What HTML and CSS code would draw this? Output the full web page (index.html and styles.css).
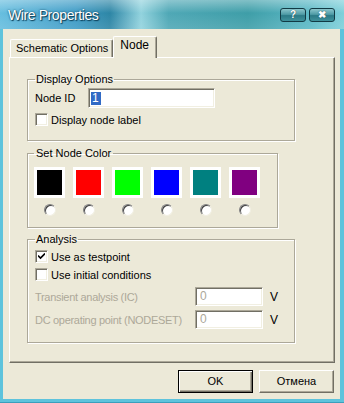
FILE: index.html
```html
<!DOCTYPE html>
<html lang="ru">
<head>
    <meta charset="UTF-8">
    <title>Wire Properties</title>
    <link rel="stylesheet" href="styles.css">
</head>
<body>
<div class="window">
    <div class="titlebar">
        <span class="title">Wire Properties</span>
        <div class="caption-buttons">
            <span class="cap-btn">?</span>
            <span class="cap-btn">&#x2716;</span>
        </div>
    </div>
    <div class="client">
        <div class="tabs">
            <div class="tab">Schematic Options</div>
            <div class="tab active">Node</div>
        </div>
        <div class="panel">
            <fieldset class="group group-display">
                <legend>Display Options</legend>
                <div class="row">
                    <span class="label label-id">Node ID</span>
                    <div class="field field-id"><span class="sel">1</span></div>
                </div>
                <div class="check"><span class="box"></span>Display node label</div>
            </fieldset>

            <fieldset class="group group-colors">
                <legend>Set Node Color</legend>
                <div class="swatches">
                    <div class="swatch"><span class="chip c-black"></span><span class="radio"></span></div>
                    <div class="swatch"><span class="chip c-red"></span><span class="radio"></span></div>
                    <div class="swatch"><span class="chip c-lime"></span><span class="radio"></span></div>
                    <div class="swatch"><span class="chip c-blue"></span><span class="radio"></span></div>
                    <div class="swatch"><span class="chip c-teal"></span><span class="radio"></span></div>
                    <div class="swatch"><span class="chip c-purple"></span><span class="radio"></span></div>
                </div>
            </fieldset>

            <fieldset class="group group-analysis">
                <legend>Analysis</legend>
                <div class="check">
                    <span class="box"><svg width="7" height="7" viewBox="0 0 7 7"><path d="M0 2.5 L2.5 5 L7 0.5" fill="none" stroke="#000" stroke-width="1.6"/></svg></span>Use as testpoint
                </div>
                <div class="check check-second"><span class="box"></span>Use initial conditions</div>
                <div class="row row-value row-first">
                    <span class="label label-value disabled">Transient analysis (IC)</span>
                    <div class="field field-value">0</div>
                    <span class="unit">V</span>
                </div>
                <div class="row row-value">
                    <span class="label label-value disabled">DC operating point (NODESET)</span>
                    <div class="field field-value">0</div>
                    <span class="unit">V</span>
                </div>
            </fieldset>
        </div>
        <div class="buttons">
            <div class="button default">OK</div>
            <div class="button">Отмена</div>
        </div>
    </div>
</div>
</body>
</html>
```

FILE: styles.css
```css
body {
    margin: 0;
    font-family: "Liberation Sans", Arial, sans-serif;
    font-size: 11px;
    color: #000;
}
.window {
    width: 344px;
    height: 403px;
    box-sizing: border-box;
    display: flex;
    flex-direction: column;
    padding: 0 4px 3px 3px;
    background: #5ec3dc;
    border-bottom: 1px solid #3a9fbc;
}
.titlebar {
    height: 29px;
    margin: 0 -4px 0 -3px;
    padding: 0 9px 0 8px;
    display: flex;
    align-items: center;
    justify-content: space-between;
    background:
        linear-gradient(to bottom, rgba(255, 255, 255, 0.35), rgba(255, 255, 255, 0) 45%, rgba(255, 255, 255, 0.1)),
        linear-gradient(to right, #67bedf 0, #3f9cc6 22%, #2d86a6 32%, #92d3de 41%, #4fa8b6 49%, #3e9ea8 72%, #5cb9c6 90%, #7fd0da 100%);
}
.title {
    font-size: 14px;
    letter-spacing: -0.4px;
    color: #fff;
    text-shadow: 0 0 2px #0c3f58, 1px 1px 1px #0c3f58;
}
.caption-buttons {
    display: flex;
    gap: 3px;
    margin-top: 1px;
}
.cap-btn {
    width: 24px;
    height: 12px;
    border: 1px solid #123a44;
    border-radius: 3px;
    background: linear-gradient(to bottom, #8bc6cc 0, #4f9ba6 45%, #2c7a86 55%, #3f929c 100%);
    color: #fff;
    font-size: 10px;
    font-weight: bold;
    line-height: 12px;
    text-align: center;
    text-shadow: 0 0 1px #123a44;
}
.client {
    flex: 1;
    display: flex;
    flex-direction: column;
    background: #ece9d8;
    padding: 7px 5px 0 6px;
}
.tabs {
    display: flex;
    align-items: flex-end;
    padding-left: 1px;
    position: relative;
    z-index: 1;
}
.tab {
    height: 17px;
    padding: 0 4px 0 5px;
    line-height: 16px;
    border: 1px solid #fff;
    border-right-color: #716f64;
    border-bottom: none;
    border-radius: 2px 2px 0 0;
    box-shadow: inset -1px 0 0 #aca899;
    background: #ece9d8;
    white-space: nowrap;
}
.tab.active {
    height: 21px;
    margin-bottom: -1px;
    padding: 0 7px 0 6px;
    line-height: 17px;
    font-size: 12px;
}
.panel {
    height: 306px;
    box-sizing: border-box;
    padding: 15px 0 0 17px;
    border: 1px solid #fff;
    border-right-color: #716f64;
    border-bottom-color: #716f64;
    box-shadow: inset -1px -1px 0 #aca899;
}
.group {
    margin: 0;
    min-width: 0;
    box-sizing: border-box;
    border: 1px solid #aca899;
    box-shadow: inset 1px 1px 0 #fff, 1px 1px 0 #fff;
}
.group legend {
    padding: 0 1px;
    margin-left: 0;
    line-height: 13px;
}
.group-display {
    width: 268px;
    padding: 2px 7px 14px;
}
.group-colors {
    width: 251px;
    margin-top: 6px;
    padding: 7px 6px 11px;
}
.group-colors legend {
    padding: 0 2px;
}
.group-analysis {
    width: 268px;
    margin-top: 5px;
    padding: 4px 7px 13px;
}
.row {
    display: flex;
    align-items: center;
}
.label-id {
    width: 53px;
}
.field {
    box-sizing: border-box;
    background: #fff;
    border: 1px solid #aca899;
    border-right-color: #fff;
    border-bottom-color: #fff;
    box-shadow: inset 1px 1px 0 #716f64, inset -1px -1px 0 #f1efe2;
}
.field-id {
    width: 127px;
    height: 20px;
    padding: 3px 2px;
    line-height: 13px;
    font-size: 12px;
}
.sel {
    display: inline-block;
    padding: 0 2px 0 1px;
    background: #316ac5;
    color: #fff;
}
.check {
    display: flex;
    align-items: center;
    height: 13px;
    margin-top: 5px;
}
.box {
    width: 13px;
    height: 13px;
    box-sizing: border-box;
    margin-right: 3px;
    display: flex;
    align-items: center;
    justify-content: center;
    background: #fff;
    border: 1px solid #aca899;
    border-right-color: #fff;
    border-bottom-color: #fff;
    box-shadow: inset 1px 1px 0 #716f64, inset -1px -1px 0 #f1efe2;
}
.group-analysis .check {
    margin-top: 0;
}
.group-analysis .check-second {
    margin-top: 5px;
}
.swatches {
    display: flex;
    gap: 8px;
}
.swatch {
    display: flex;
    flex-direction: column;
    align-items: center;
    gap: 6px;
}
.chip {
    width: 25px;
    height: 25px;
    border: 3px solid #fff;
}
.c-black { background: #000; }
.c-red { background: #ff0000; }
.c-lime { background: #00ff00; }
.c-blue { background: #0000ff; }
.c-teal { background: #008080; }
.c-purple { background: #800080; }
.radio {
    width: 12px;
    height: 12px;
    box-sizing: border-box;
    border-radius: 50%;
    background: #fff;
    border: 1px solid;
    border-color: #808080 #f1efe2 #f1efe2 #808080;
    box-shadow: inset 1px 1px 0 #404040;
}
.row-value {
    height: 19px;
    margin-top: 4px;
}
.row-first {
    margin-top: 6px;
}
.label-value {
    width: 160px;
    white-space: nowrap;
    letter-spacing: -0.3px;
}
.disabled {
    color: #aca899;
}
.field-value {
    width: 68px;
    height: 19px;
    padding: 2px 4px;
    line-height: 13px;
    font-size: 12px;
    color: #aca899;
}
.unit {
    margin-left: 7px;
    font-size: 12px;
}
.buttons {
    display: flex;
    justify-content: flex-end;
    gap: 6px;
    margin-top: 7px;
    padding-right: 1px;
}
.button {
    width: 75px;
    height: 23px;
    box-sizing: border-box;
    line-height: 20px;
    text-align: center;
    border: 1px solid #fff;
    border-right-color: #716f64;
    border-bottom-color: #716f64;
    box-shadow: inset -1px -1px 0 #aca899;
}
.button.default {
    border: 1px solid #000;
    box-shadow: inset 1px 1px 0 #fff, inset -1px -1px 0 #716f64, inset -2px -2px 0 #aca899;
}
```
